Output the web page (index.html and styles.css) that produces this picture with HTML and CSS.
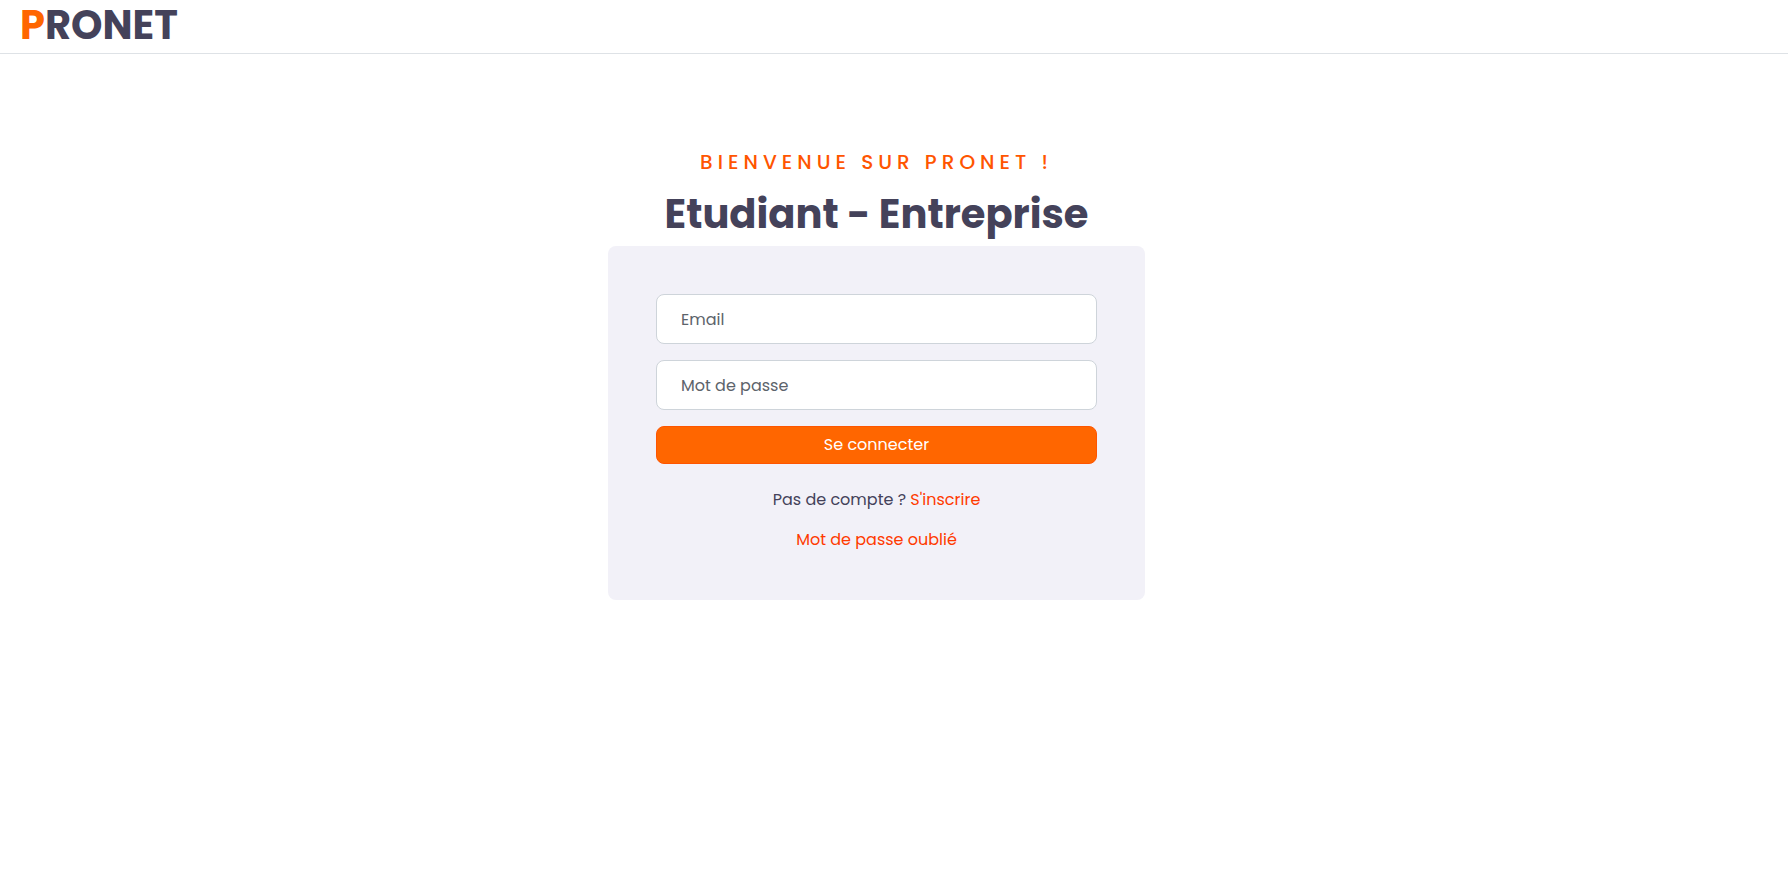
FILE: index.html
```html
<!DOCTYPE html>
<html lang="fr">
<head>
<meta charset="utf-8">
<meta name="viewport" content="width=device-width, initial-scale=1">
<title>PRONET</title>
<link rel="stylesheet" href="styles.css">
</head>
<body>
<header class="navbar">
  <a class="brand" href="#"><span class="brand-initial">P</span>RONET</a>
</header>
<main class="login">
  <p class="welcome">Bienvenue sur Pronet !</p>
  <h1 class="title">Etudiant - Entreprise</h1>
  <form class="card">
    <input class="field" type="email" placeholder="Email" aria-label="Email">
    <input class="field" type="password" placeholder="Mot de passe" aria-label="Mot de passe">
    <button class="submit" type="submit">Se connecter</button>
    <p class="signup">Pas de compte ? <a class="link" href="#">S'inscrire</a></p>
    <p class="forgot"><a class="link" href="#">Mot de passe oublié</a></p>
  </form>
</main>
</body>
</html>
```
FILE: styles.css
```css
* { box-sizing: border-box; }

body {
  margin: 0;
  background: #fff;
  color: #44425a;
  font-family: Poppins, Inter, "Open Sans", sans-serif;
  font-size: 16px;
  font-weight: 400;
  line-height: 24px;
}

.navbar {
  display: flex;
  padding: 1px 20px 4px;
  border-bottom: 1px solid #dee2e6;
}

.brand {
  color: #44425a;
  font-size: 40px;
  font-weight: 700;
  line-height: 48px;
  text-decoration: none;
}

.brand-initial { color: #ff6600; }

.login {
  display: flex;
  flex-direction: column;
  align-items: center;
  padding: 96px 35px 48px 0;
}

.welcome {
  margin: 0 0 16px;
  color: #ff5500;
  font-size: 20px;
  font-weight: 500;
  letter-spacing: 5px;
  text-transform: uppercase;
}

.title {
  margin: 0 0 8px;
  font-size: 40px;
  font-weight: 700;
  line-height: 48px;
}

.card {
  display: flex;
  flex-direction: column;
  width: 100%;
  max-width: 537px;
  padding: 48px;
  border-radius: 8px;
  background: #f2f1f8;
}

.field {
  width: 100%;
  margin: 0 0 16px;
  padding: 13px 24px 11px;
  border: 1px solid #ced4da;
  border-radius: 8px;
  background: #fff;
  color: #44425a;
  font: inherit;
}

.field::placeholder {
  color: #5c636b;
  opacity: 1;
}

.submit {
  margin: 0 0 24px;
  padding: 6px 12px;
  border: 1px solid #ff5500;
  border-radius: 8px;
  background: #ff6600;
  color: #fff;
  font: inherit;
  cursor: pointer;
}

.signup,
.forgot {
  margin: 0;
  text-align: center;
}

.signup { margin-bottom: 16px; }

.link {
  color: #ff3a00;
  text-decoration: none;
}
```
